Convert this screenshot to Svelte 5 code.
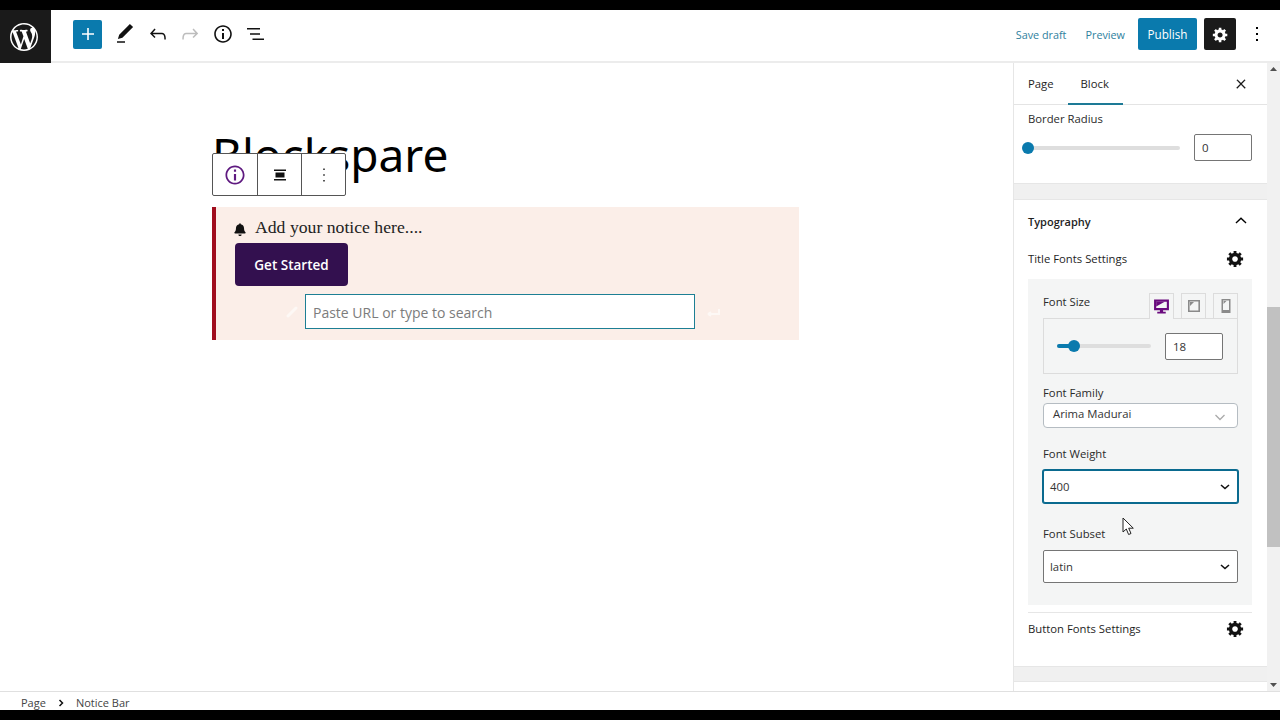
<script lang="ts">
  const cog =
    'M18 12h-2.18c-.17.7-.44 1.35-.81 1.93l1.54 1.54-2.1 2.1-1.54-1.54c-.58.36-1.23.63-1.91.79V19H8v-2.18c-.68-.16-1.33-.43-1.91-.79l-1.54 1.54-2.12-2.12 1.54-1.54c-.36-.58-.63-1.23-.79-1.91H1V9.03h2.17c.16-.7.44-1.35.8-1.94L2.43 5.55l2.1-2.1 1.54 1.54c.58-.37 1.24-.64 1.93-.81V2h3v2.18c.68.16 1.33.43 1.91.79l1.54-1.54 2.12 2.12-1.54 1.54c.36.59.64 1.24.8 1.94H18V12zm-8.5 1.5c1.66 0 3-1.34 3-3s-1.34-3-3-3-3 1.34-3 3 1.34 3 3 3z'
  const info =
    'M12 3.2c-4.8 0-8.8 3.9-8.8 8.8 0 4.8 3.9 8.8 8.8 8.8 4.8 0 8.8-3.9 8.8-8.8 0-4.8-4-8.8-8.8-8.8zm0 16c-4 0-7.2-3.3-7.2-7.2C4.8 8 8 4.8 12 4.8s7.2 3.3 7.2 7.2c0 4-3.2 7.2-7.2 7.2zM11 17h2v-6h-2v6zm0-8h2V7h-2v2z'
</script>

<div class="page">
  <div class="letterbox"></div>

  <header class="topbar">
    <a class="logo" href="#top" aria-label="WordPress">
      <svg width="28" height="28" viewBox="0 0 20 20" fill="#fff">
        <path d="M20 10c0-5.51-4.49-10-10-10C4.48 0 0 4.49 0 10c0 5.52 4.48 10 10 10 5.51 0 10-4.48 10-10zM7.78 15.37L4.37 6.22c.55-.02 1.17-.08 1.17-.08.5-.06.44-1.13-.06-1.11 0 0-1.45.11-2.37.11-.18 0-.37 0-.58-.01C4.12 2.69 6.87 1.11 10 1.11c2.33 0 4.45.87 6.05 2.34-.68-.11-1.65.39-1.65 1.58 0 .74.45 1.36.9 2.1.35.61.55 1.36.55 2.46 0 1.49-1.4 5-1.4 5l-3.03-8.37c.54-.02.82-.17.82-.17.5-.05.44-1.25-.06-1.22 0 0-1.44.12-2.38.12-.87 0-2.33-.12-2.33-.12-.5-.03-.56 1.2-.06 1.22l.92.08 1.26 3.41zM17.41 10c.24-.64.74-1.87.43-4.25.7 1.29 1.05 2.71 1.05 4.25 0 3.29-1.73 6.24-4.4 7.78.97-2.59 1.94-5.2 2.92-7.78zM6.1 18.09C3.12 16.65 1.11 13.53 1.11 10c0-1.3.23-2.48.72-3.59C3.25 10.3 4.67 14.2 6.1 18.09zm4.03-6.63l2.58 6.98c-.86.29-1.76.45-2.71.45-.79 0-1.57-.11-2.29-.33.81-2.38 1.62-4.74 2.42-7.1z" />
      </svg>
    </a>

    <div class="tools">
      <button class="add" aria-label="Add block">
        <svg width="24" height="24" viewBox="0 0 24 24" fill="#fff"><path d="M18 11.2h-5.2V6h-1.6v5.2H6v1.6h5.2V18h1.6v-5.2H18z" /></svg>
      </button>
      <svg class="tool" width="24" height="24" viewBox="0 0 24 24"><path d="M20.1 5.1L16.9 2 6.2 12.7l-1.3 4.4 4.5-1.3L20.1 5.1zM4 20.8h8v-1.5H4v1.5z" /></svg>
      <svg class="tool" width="24" height="24" viewBox="0 0 24 24"><path d="M18.3 11.7c-.6-.6-1.4-.9-2.3-.9H6.7l2.9-3.3-1.1-1-4.5 5L8.5 16l1-1-2.7-2.7H16c.5 0 .9.2 1.3.5 1 1 1 3.4 1 4.5v.3h1.5v-.2c0-1.5 0-4.3-1.5-5.7z" /></svg>
      <svg class="tool redo" width="24" height="24" viewBox="0 0 24 24"><path d="M15.6 6.5l-1.1 1 2.9 3.3H8c-.9 0-1.7.3-2.3.9-1.4 1.5-1.4 4.2-1.4 5.6v.2h1.5v-.3c0-1.1 0-3.5 1-4.5.3-.3.7-.5 1.3-.5h9.2L14.5 15l1.1 1.1 4.6-4.6-4.6-5z" /></svg>
      <svg class="tool" width="24" height="24" viewBox="0 0 24 24"><path d={info} /></svg>
      <svg class="tool" width="24" height="24" viewBox="0 0 24 24"><path d="M4 6h13v1.5H4zM7 11.2h10v1.5H7zM9.5 16.5H21V18H9.5z" /></svg>
    </div>

    <div class="actions">
      <span class="link-btn">Save draft</span>
      <span class="link-btn">Preview</span>
      <button class="publish">Publish</button>
      <button class="settings" aria-label="Settings">
        <svg width="17" height="17" viewBox="0 0 20 20" fill="#fff"><path d={cog} /></svg>
      </button>
      <svg class="kebab" width="24" height="24" viewBox="0 0 24 24"><path d="M13 19h-2v-2h2v2zm0-6h-2v-2h2v2zm0-6h-2V5h2v2z" /></svg>
    </div>
  </header>

  <div class="body">
    <main class="canvas">
      <div class="editor">
        <h1>Blockspare</h1>

        <div class="block-toolbar">
          <span class="cell">
            <svg width="26" height="26" viewBox="0 0 24 24" fill="#5f1a80"><path d={info} /></svg>
          </span>
          <span class="cell">
            <svg width="24" height="24" viewBox="0 0 24 24" fill="#111"><path d="M6 6.5h12v1.4H6zM7.5 9.5h9v5h-9zM6 16.1h12v1.4H6z" /></svg>
          </span>
          <span class="cell">
            <svg width="24" height="24" viewBox="0 0 24 24" fill="#111"><path d="M12.7 18.5h-1.4v-1.6h1.4v1.6zm0-5.7h-1.4v-1.6h1.4v1.6zm0-5.7h-1.4V5.5h1.4v1.6z" /></svg>
          </span>
        </div>

        <section class="notice">
          <div class="notice-text">
            <svg width="12" height="13" viewBox="0 0 448 512" fill="#111"><path d="M224 512c35 0 64-29 64-64H160c0 35 29 64 64 64zm215-150c-19-21-56-52-56-154 0-78-54-140-128-155V32a32 32 0 0 0-62 0v21C119 68 65 130 65 208c0 102-37 133-56 154-6 6-9 14-9 22 0 16 13 32 32 32h384c19 0 32-16 32-32 0-8-3-16-9-22z" /></svg>
            <span>Add your notice here....</span>
          </div>
          <button class="cta">Get Started</button>
          <div class="url-row">
            <svg class="faint" width="14" height="14" viewBox="0 0 14 14" fill="none" stroke="#fff" stroke-width="3"><path d="M3 11l8-8" stroke-linecap="round" /></svg>
            <input class="url" placeholder="Paste URL or type to search" />
            <svg class="faint" width="14" height="14" viewBox="0 0 14 14" fill="none" stroke="#fff" stroke-width="2"><path d="M1 9h11V4M1 9l3-2M1 9l3 2" /></svg>
          </div>
        </section>
      </div>
    </main>

    <aside class="sidebar">
      <div class="panel">
        <div class="tabs">
          <span class="tab">Page</span>
          <span class="tab active">Block</span>
          <svg class="close" width="24" height="24" viewBox="0 0 24 24"><path d="M13 11.8l6.1-6.3-1-1-6.1 6.2-6.1-6.2-1 1 6.1 6.3-6.5 6.7 1 1 6.5-6.6 6.5 6.6 1-1z" stroke="#111" stroke-width="0.8" /></svg>
        </div>

        <div class="section radius">
          <label class="label" for="radius">Border Radius</label>
          <div class="range-row">
            <div class="slider wide"><span class="thumb"></span></div>
            <input id="radius" class="num" value="0" />
          </div>
        </div>

        <div class="band"></div>

        <div class="section typography">
          <div class="section-head">
            <strong>Typography</strong>
            <svg width="20" height="20" viewBox="0 0 24 24"><path d="M6.5 15l5.5-5.2 5.5 5.2 1.1-1.1L12 7.6l-6.6 6.3z" /></svg>
          </div>

          <div class="row-head title-fonts">
            <span>Title Fonts Settings</span>
            <svg width="19" height="19" viewBox="0 0 20 20" fill="#111"><path d={cog} /></svg>
          </div>

          <div class="fonts">
            <div class="size-head">
              <span class="label-text">Font Size</span>
              <div class="devices">
                <span class="device current">
                  <svg width="17" height="17" viewBox="0 0 16 16" fill="#6a0a7e"><path d="M1 1.5h14v10H9.5v1.5H12v1.5H4V13h2.5v-1.5H1zM3 3.5v6h10v-6z" /><path d="M3 3.5h8l-8 4.5z" /></svg>
                </span>
                <span class="device">
                  <svg width="14" height="14" viewBox="0 0 14 14" fill="#8a8a8a"><path d="M1 1h12v12H1zM2.6 2.6v8.8h8.8V2.6z" /><path d="M3 3h4L3 7z" /></svg>
                </span>
                <span class="device">
                  <svg width="12" height="14" viewBox="0 0 12 14" fill="#8a8a8a"><path d="M1.5 0h9v14h-9zM3 1.5V11h6V1.5z" /><path d="M3.5 2h3l-3 3z" /></svg>
                </span>
              </div>
            </div>

            <div class="size-box">
              <div class="slider narrow"><span class="fill"></span><span class="thumb"></span></div>
              <input class="num" value="18" aria-label="Font size" />
            </div>

            <label class="label-text family-label" for="family">Font Family</label>
            <div id="family" class="combo">
              <span>Arima Madurai</span>
              <svg width="14" height="14" viewBox="0 0 14 14" fill="none" stroke="#aaa" stroke-width="1.3"><path d="M2.5 5l4.5 4.5L11.5 5" /></svg>
            </div>

            <label class="label-text weight-label" for="weight">Font Weight</label>
            <div id="weight" class="select focused">
              <span>400</span>
              <svg width="10" height="6" viewBox="0 0 10 6" fill="none" stroke="#111" stroke-width="1.6"><path d="M1 1l4 3.5L9 1" /></svg>
            </div>

            <label class="label-text subset-label" for="subset">Font Subset</label>
            <div id="subset" class="select">
              <span>latin</span>
              <svg width="10" height="6" viewBox="0 0 10 6" fill="none" stroke="#111" stroke-width="1.6"><path d="M1 1l4 3.5L9 1" /></svg>
            </div>
          </div>

          <div class="row-head button-fonts">
            <span>Button Fonts Settings</span>
            <svg width="19" height="19" viewBox="0 0 20 20" fill="#111"><path d={cog} /></svg>
          </div>
        </div>

        <div class="band last"></div>
      </div>

      <div class="scrollbar">
        <svg width="13" height="13" viewBox="0 0 13 13" fill="#505050"><path d="M6.5 4l3.5 4H3z" /></svg>
        <div class="track"><span class="bar"></span></div>
        <svg width="13" height="13" viewBox="0 0 13 13" fill="#505050"><path d="M6.5 9L3 5h7z" /></svg>
      </div>
    </aside>

    <svg class="cursor" width="13" height="19" viewBox="0 0 13 19"><path d="M1 1v14l3.3-3 2.3 5.5 2.4-1-2.3-5.3h4.6z" fill="#fff" stroke="#222" stroke-width="1" /></svg>
  </div>

  <footer class="crumbs">
    <span>Page</span>
    <svg width="8" height="8" viewBox="0 0 8 8" fill="none" stroke="#111" stroke-width="1.5"><path d="M2.5 1l3 3-3 3" /></svg>
    <span>Notice Bar</span>
  </footer>

  <div class="letterbox"></div>
</div>

<style>
  :global(body) {
    margin: 0;
    background: #000;
  }

  .page {
    position: relative;
    display: flex;
    flex-direction: column;
    width: 1280px;
    height: 720px;
    overflow: hidden;
    background: #fff;
    color: #1e1e1e;
    font-family: 'Open Sans', 'Noto Sans', sans-serif;
    font-size: 11.3px;
  }

  .letterbox {
    flex: none;
    height: 10px;
    background: #000;
  }

  button {
    border: 0;
    padding: 0;
    font: inherit;
    cursor: pointer;
  }

  /* top bar */
  .topbar {
    flex: none;
    display: flex;
    align-items: center;
    height: 51px;
    border-bottom: 2px solid #ececec;
  }

  .logo {
    display: flex;
    align-items: center;
    justify-content: center;
    align-self: stretch;
    box-sizing: border-box;
    width: 51px;
    padding-right: 3px;
    margin-bottom: -2px;
    background: #1a1a1a;
  }

  .tools {
    display: flex;
    align-items: center;
    margin-left: 22px;
    margin-top: -3px;
  }

  .add {
    display: flex;
    align-items: center;
    justify-content: center;
    width: 29px;
    height: 29px;
    border-radius: 2px;
    background: #0a7aad;
    margin-right: 11px;
  }

  .tool {
    margin-right: 8.5px;
    fill: #111;
  }

  .tool.redo {
    fill: #bdbdbd;
  }

  .actions {
    display: flex;
    align-items: center;
    margin-left: auto;
    margin-top: -3px;
  }

  .link-btn {
    margin-right: 19px;
    color: #2f7f9e;
    font-size: 10.8px;
  }

  .publish {
    width: 59px;
    height: 32px;
    margin-left: -6px;
    border-radius: 2px;
    background: #0a7aad;
    color: #fff;
    font-size: 11.7px;
    font-weight: 500;
  }

  .settings {
    display: flex;
    align-items: center;
    justify-content: center;
    width: 32px;
    height: 32px;
    margin-left: 7px;
    border-radius: 2px;
    background: #1a1a1a;
  }

  .kebab {
    margin: 0 11px 0 9px;
  }

  /* main area */
  .body {
    position: relative;
    flex: 1;
    display: flex;
    min-height: 0;
  }

  .canvas {
    flex: 1;
    min-width: 0;
  }

  .editor {
    position: relative;
    width: 587px;
    margin-left: 212px;
  }

  h1 {
    margin: 0;
    padding: 60px 0 0;
    height: 84px;
    color: #000;
    font-family: 'Noto Sans', sans-serif;
    font-size: 46px;
    font-weight: 400;
    line-height: 62px;
  }

  .block-toolbar {
    position: absolute;
    top: 90px;
    left: 0;
    display: flex;
    height: 41px;
    border: 1px solid #555;
    border-radius: 2px;
    background: #fff;
  }

  .cell {
    display: flex;
    align-items: center;
    justify-content: center;
    box-sizing: border-box;
    width: 44px;
  }

  .cell + .cell {
    border-left: 1px solid #555;
  }

  .notice {
    display: flex;
    flex-direction: column;
    align-items: flex-start;
    box-sizing: border-box;
    height: 133px;
    padding: 8px 0 0 19px;
    border-left: 4px solid #a00d1e;
    background: #fbeee8;
  }

  .notice-text {
    display: flex;
    align-items: center;
    gap: 9px;
    height: 26px;
    margin: -1px 0 3px -1px;
    color: #222;
    font-family: 'Liberation Serif', serif;
    font-size: 17.7px;
  }

  .notice-text svg {
    margin-top: 5px;
  }

  .cta {
    width: 113px;
    height: 43px;
    border-radius: 4px;
    background: #33104f;
    color: #fff;
    font-size: 13.5px;
    font-weight: 600;
  }

  .url-row {
    display: flex;
    align-items: center;
    gap: 6px;
    margin: 8px 0 0 50px;
  }

  .faint {
    opacity: 0.6;
  }

  .url {
    box-sizing: border-box;
    width: 390px;
    height: 35px;
    padding: 1px 7px 0;
    margin-right: 6px;
    border: 1px solid #1d7f94;
    border-radius: 0;
    background: #fff;
    color: #222;
    font: 14px 'Open Sans', sans-serif;
    outline: none;
  }

  .url::placeholder {
    color: #7c7c7c;
    opacity: 1;
  }

  /* sidebar */
  .sidebar {
    flex: none;
    display: flex;
    width: 267px;
    box-sizing: border-box;
    border-left: 1px solid #e6e6e6;
  }

  .panel {
    flex: 1;
    min-width: 0;
    display: flex;
    flex-direction: column;
  }

  .tabs {
    flex: none;
    display: flex;
    align-items: center;
    height: 42px;
    box-sizing: border-box;
    padding-left: 14px;
    border-bottom: 1px solid #e4e4e4;
  }

  .tab {
    display: flex;
    align-items: center;
    height: 41px;
    margin-right: 27px;
    color: #1e1e1e;
    font-weight: 500;
    box-sizing: border-box;
  }

  .tab.active {
    position: relative;
  }

  .tab.active::after {
    content: '';
    position: absolute;
    left: -13px;
    right: -14px;
    bottom: -1px;
    height: 2px;
    background: #1d7a96;
  }

  .close {
    margin: 0 19px 0 auto;
    width: 14px;
    height: 14px;
  }

  .section {
    padding: 0 15px 0 14px;
  }

  .radius {
    flex: none;
    height: 78px;
    box-sizing: border-box;
    padding-top: 6px;
  }

  .label,
  .label-text {
    display: block;
    color: #2a2a2a;
    font-size: 11.3px;
    line-height: 16px;
  }

  .range-row {
    display: flex;
    align-items: center;
    margin-top: 7px;
  }

  .slider {
    position: relative;
    height: 4px;
    border-radius: 2px;
    background: #dedede;
  }

  .slider.wide {
    width: 152px;
    margin-right: 14px;
    margin-top: 1px;
  }

  .slider.narrow {
    width: 94px;
    margin-right: 14px;
  }

  .thumb {
    position: absolute;
    top: -4px;
    left: -6px;
    width: 12px;
    height: 12px;
    border-radius: 50%;
    background: #0a7aad;
  }

  .narrow .thumb {
    left: 11px;
  }

  .fill {
    position: absolute;
    inset: 0 auto 0 0;
    width: 16px;
    border-radius: 2px;
    background: #0a7aad;
  }

  .num {
    box-sizing: border-box;
    width: 58px;
    height: 27px;
    padding: 0 7px;
    border: 1px solid #757575;
    border-radius: 2px;
    background: #fff;
    color: #333;
    font: 11.5px 'Open Sans', sans-serif;
    outline: none;
  }

  .band {
    flex: none;
    height: 15px;
    background: #f0f0f0;
    border-top: 1px solid #e6e6e6;
    border-bottom: 1px solid #e6e6e6;
  }

  .band.last {
    height: 14px;
  }

  .section-head {
    display: flex;
    align-items: center;
    justify-content: space-between;
    height: 16px;
    margin-top: 13px;
    font-size: 11px;
  }

  .section-head strong {
    font-weight: 600;
  }

  .section-head svg {
    margin-right: 1px;
  }

  .row-head {
    display: flex;
    align-items: center;
    justify-content: space-between;
    height: 18px;
  }

  .row-head svg {
    margin-right: 7px;
  }

  .title-fonts {
    margin-top: 20px;
  }

  .fonts {
    box-sizing: border-box;
    height: 326px;
    margin: 12px 0 0;
    padding: 14px 14px 0 15px;
    background: #f4f5f5;
  }

  .size-head {
    display: flex;
    align-items: flex-end;
    justify-content: space-between;
    height: 25px;
  }

  .size-head .label-text {
    align-self: flex-start;
    margin-top: 1px;
  }

  .devices {
    display: flex;
    gap: 7px;
    margin-bottom: -1px;
  }

  .device {
    display: flex;
    align-items: center;
    justify-content: center;
    box-sizing: border-box;
    width: 25px;
    height: 25px;
    border: 1px solid #dcdcdc;
    border-bottom: 0;
  }

  .device.current {
    position: relative;
    z-index: 1;
    height: 26px;
    background: #f4f5f5;
  }

  .size-box {
    display: flex;
    align-items: center;
    box-sizing: border-box;
    height: 56px;
    padding-left: 13px;
    border: 1px solid #dcdcdc;
  }

  .family-label {
    margin-top: 11px;
  }

  .combo {
    display: flex;
    align-items: center;
    justify-content: space-between;
    box-sizing: border-box;
    height: 25px;
    margin-top: 2px;
    padding: 0 10px 4px 9px;
    border: 1px solid #b5bcc2;
    border-radius: 4px;
    background: #fff;
    color: #333;
  }

  .combo svg {
    margin-top: 6px;
  }

  .weight-label {
    margin-top: 18px;
  }

  .subset-label {
    margin-top: 23px;
  }

  .select {
    display: flex;
    align-items: center;
    justify-content: space-between;
    box-sizing: border-box;
    height: 33px;
    margin-top: 8px;
    padding: 0 7px 0 6px;
    border: 1px solid #757575;
    border-radius: 2px;
    background: #fff;
    color: #333;
  }

  .select.focused {
    border-color: #0a6a8f;
    box-shadow: 0 0 0 1px #0a6a8f;
  }

  .button-fonts {
    position: relative;
    margin-top: 14px;
  }

  .button-fonts::before {
    content: '';
    position: absolute;
    top: -7px;
    left: 0;
    right: 0;
    height: 1px;
    background: #e6e6e6;
  }

  .typography {
    flex: none;
    height: 466px;
    box-sizing: border-box;
  }

  .scrollbar {
    flex: none;
    display: flex;
    flex-direction: column;
    width: 13px;
    background: #f1f1f1;
  }

  .track {
    flex: 1;
    padding-top: 231px;
  }

  .bar {
    display: block;
    height: 240px;
    background: #c1c1c1;
  }

  .cursor {
    position: absolute;
    top: 454px;
    left: 1122px;
  }

  .crumbs {
    flex: none;
    display: flex;
    align-items: center;
    gap: 11px;
    height: 19px;
    box-sizing: border-box;
    padding: 3px 0 0 21px;
    border-top: 1px solid #e0e0e0;
    background: #fff;
    color: #444;
    font-size: 11px;
  }
</style>
